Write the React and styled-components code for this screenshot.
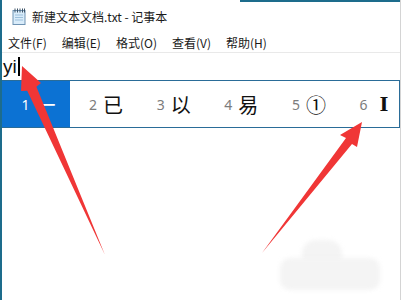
import React from "react";
import styled, { createGlobalStyle } from "styled-components";

const Global = createGlobalStyle`
  html, body { margin: 0; padding: 0; background: #fff; }
  body { width: 401px; height: 300px; overflow: hidden; font-family: "Noto Sans CJK SC", "Noto Sans", sans-serif; }
`;

const Window = styled.div`
  position: relative;
  width: 401px;
  height: 300px;
  box-sizing: border-box;
  border-left: 2px solid #1d6c8c;
  border-right: 1px solid #d4d4d4;
  background: #fff;
  overflow: hidden;
  &::before {
    content: "";
    position: absolute;
    top: 0;
    right: 0;
    width: 160px;
    height: 2px;
    background: #1d6c8c;
  }
`;

const TitleBar = styled.div`
  height: 33px;
  display: flex;
  align-items: center;
  gap: 6px;
  padding-left: 10px;
  font-size: 12px;
  color: #1a1a1a;
`;

const MenuBar = styled.div`
  height: 19px;
  display: flex;
  align-items: center;
  gap: 15px;
  padding-left: 6px;
  border-bottom: 1px solid #e9e9e9;
  font-size: 12px;
  color: #1a1a1a;
`;

const MenuItem = styled.span`
  white-space: nowrap;
`;

const Editor = styled.div`
  height: 27px;
  display: flex;
  align-items: center;
  padding-left: 1px;
  font-family: "Liberation Sans", Arial, sans-serif;
  font-size: 19px;
  color: #111;
`;

const Caret = styled.span`
  display: inline-block;
  width: 2px;
  height: 19px;
  margin-left: 1px;
  background: #000;
`;

const CandidateBar = styled.div`
  height: 46px;
  display: flex;
  border-top: 1px solid #2a6c98;
  border-bottom: 1px solid #2a6c98;
  border-right: 1px solid #2a6c98;
  overflow: hidden;
`;

const Candidate = styled.div`
  flex: 0 0 67.6px;
  display: flex;
  align-items: center;
  gap: 6px;
  padding-left: 19.5px;
  box-sizing: border-box;
  background: ${(p) => (p.$selected ? "#0c72d3" : "#fff")};
  white-space: nowrap;
`;

const Num = styled.span`
  font-family: "Noto Sans", "Liberation Sans", sans-serif;
  font-size: 14px;
  color: ${(p) => (p.$selected ? "#fff" : "#7c7c7c")};
`;

const Word = styled.span`
  font-family: ${(p) =>
    p.$serif ? '"DejaVu Serif", "Liberation Serif", serif' : '"Noto Sans CJK SC", sans-serif'};
  font-size: ${(p) => (p.$serif ? "19px" : "20px")};
  font-weight: ${(p) => (p.$serif ? 700 : 400)};
  margin-left: ${(p) => (p.$serif ? "6px" : "0")};
  color: ${(p) => (p.$selected ? "#fff" : "#111")};
`;

const Overlay = styled.svg`
  position: absolute;
  left: -2px;
  top: 0;
  width: 401px;
  height: 300px;
  pointer-events: none;
`;

const Smudge = styled.div`
  position: absolute;
  left: ${(p) => p.$x}px;
  top: ${(p) => p.$y}px;
  width: ${(p) => p.$w}px;
  height: ${(p) => p.$h}px;
  background: #f4f4f4;
  border-radius: ${(p) => p.$r}px;
  filter: blur(2px);
`;

const NoteIcon = () => (
  <svg width="14" height="17" viewBox="0 0 14 17">
    <rect x="1" y="2.5" width="12" height="14" fill="#d9ecfa" stroke="#6f93b3" />
    <line x1="3" y1="7" x2="11" y2="7" stroke="#9cc0dc" />
    <line x1="3" y1="9.5" x2="11" y2="9.5" stroke="#9cc0dc" />
    <line x1="3" y1="12" x2="11" y2="12" stroke="#9cc0dc" />
    {[2.5, 5, 7.5, 10, 12].map((x) => (
      <rect key={x} x={x} y="0.5" width="1" height="4" fill="#3f5568" />
    ))}
  </svg>
);

const candidates = ["一", "已", "以", "易", "①", "Ⅰ"];
const menus = ["文件(F)", "编辑(E)", "格式(O)", "查看(V)", "帮助(H)"];

export default function App() {
  return (
    <>
      <Global />
      <Window>
        <TitleBar>
          <NoteIcon />
          <span>新建文本文档.txt - 记事本</span>
        </TitleBar>
        <MenuBar>
          {menus.map((m) => (
            <MenuItem key={m}>{m}</MenuItem>
          ))}
        </MenuBar>
        <Editor>
          yi<Caret />
        </Editor>
        <CandidateBar>
          {candidates.map((c, i) => (
            <Candidate key={i} $selected={i === 0}>
              <Num $selected={i === 0}>{i + 1}</Num>
              <Word $selected={i === 0} $serif={c === "Ⅰ"}>{c}</Word>
            </Candidate>
          ))}
        </CandidateBar>
        <Smudge $x={300} $y={240} $w={40} $h={30} $r={14} />
        <Smudge $x={278} $y={258} $w={100} $h={32} $r={10} />
        <Overlay viewBox="0 0 401 300">
          <polygon
            points="22,66 41,83 36.4,86.8 105,255 27.2,90.8 21,91"
            fill="#f03636"
          />
          <polygon
            points="362,122 357,147 352,144 262,253 346,138 340,135"
            fill="#f03636"
          />
        </Overlay>
      </Window>
    </>
  );
}
